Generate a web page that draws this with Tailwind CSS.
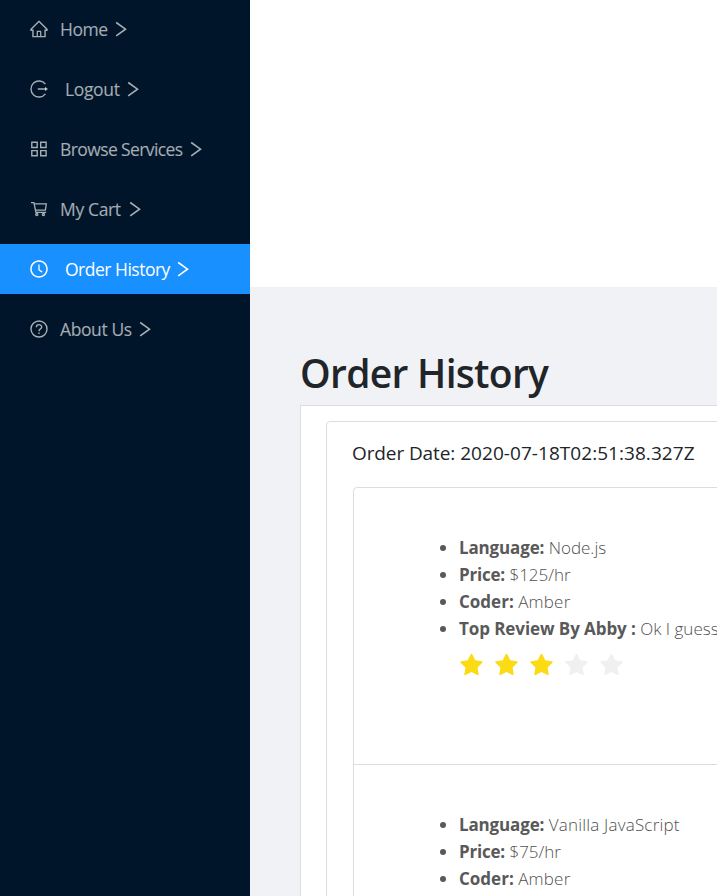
<!DOCTYPE html>
<html lang="en">
<head>
<meta charset="utf-8">
<title>Order History</title>
<script src="https://cdn.jsdelivr.net/npm/@tailwindcss/browser@4"></script>
</head>
<body class="h-[896px] overflow-hidden bg-[#f0f2f5] font-['Open_Sans','Noto_Sans',sans-serif]">
<svg class="hidden">
  <symbol id="star" viewBox="0 0 1024 1024"><path d="M908.1 353.1l-253.9-36.9L540.7 86.1c-3.1-6.3-8.2-11.4-14.5-14.5-15.8-7.8-35-1.3-42.9 14.5L369.8 316.2l-253.9 36.9c-7 1-13.4 4.3-18.3 9.3a32.05 32.05 0 0 0 .6 45.3l183.7 179.1-43.4 252.9a31.95 31.95 0 0 0 46.4 33.7L512 754l227.1 119.4c6.2 3.3 13.4 4.4 20.3 3.2 17.4-3 29.1-19.5 26.1-36.9l-43.4-252.9 183.7-179.1c5-4.9 8.3-11.3 9.3-18.3 2.7-17.5-9.5-33.7-27-36.3z"/></symbol>
  <symbol id="chev" viewBox="0 0 12 16"><path d="M1.2 1.5L10.5 8.2L1.2 14.9" fill="none" stroke="currentColor" stroke-width="1.6"/></symbol>
</svg>
<div class="flex h-full">
  <aside class="w-[250px] shrink-0 bg-[#001529] pt-1 text-[17.5px] tracking-[-0.5px] text-white/65">
    <nav class="flex flex-col gap-2.5 whitespace-nowrap">
      <a class="flex h-[50px] items-center pl-[29px]">
        <svg class="mr-[11px] size-5" viewBox="0 0 1024 1024" fill="currentColor"><path d="M946.5 505L560.1 118.8l-25.9-25.9a31.5 31.5 0 0 0-44.4 0L77.5 505a63.9 63.9 0 0 0-18.8 46c.4 35.2 29.7 63.3 64.9 63.3h42.5V940h691.8V614.3h43.4c17.1 0 33.2-6.7 45.3-18.8a63.6 63.6 0 0 0 18.7-45.3c0-17-6.7-33.1-18.8-45.2zM568 868H456V664h112v204zm217.9-325.7V868H632V640c0-22.1-17.9-40-40-40H432c-22.1 0-40 17.9-40 40v228H238.1V542.3h-96l370-369.7 23.1 23.1L882 542.3h-96.1z"/></svg>
        <span class="w-[55px]">Home</span><svg class="h-4 w-3"><use href="#chev"/></svg>
      </a>
      <a class="flex h-[50px] items-center pl-[29px]">
        <svg class="mr-[16px] size-5" viewBox="0 0 20 20" fill="none" stroke="currentColor" stroke-width="1.4"><path d="M16.4 5.2A8 8 0 1 0 16.4 14.8M8.8 10H17"/><path d="M16 7.8L19 10L16 12.2Z" fill="currentColor" stroke="none"/></svg>
        <span class="w-[62px] tracking-[-0.35px]">Logout</span><svg class="h-4 w-3"><use href="#chev"/></svg>
      </a>
      <a class="flex h-[50px] items-center pl-[29px]">
        <svg class="mr-[11px] size-5" viewBox="0 0 20 20" fill="none" stroke="currentColor" stroke-width="1.4"><path d="M2.8 3.3h5.4v5.2H2.8zM11.7 3.3h5.4v5.2h-5.4zM2.8 11.6h5.4v5.2H2.8zM11.7 11.6h5.4v5.2h-5.4z"/></svg>
        <span class="w-[130px] tracking-[-0.6px]">Browse Services</span><svg class="h-4 w-3"><use href="#chev"/></svg>
      </a>
      <a class="flex h-[50px] items-center pl-[29px]">
        <svg class="mr-[11px] size-5" viewBox="0 0 20 20" fill="none" stroke="currentColor" stroke-width="1.3"><path d="M2 3.7H4.9L6.9 13.4H17.2M5.3 4.9H17.3L16.4 11.1H6.5"/><circle cx="7.8" cy="15.6" r="1.1"/><circle cx="14.4" cy="15.6" r="1.1"/></svg>
        <span class="w-[69px] tracking-[-0.35px]">My Cart</span><svg class="h-4 w-3"><use href="#chev"/></svg>
      </a>
      <a class="flex h-[50px] items-center bg-[#1890ff] pl-[29px] text-white">
        <svg class="mr-[16px] size-5" viewBox="0 0 1024 1024" fill="currentColor"><path d="M512 64C264.6 64 64 264.6 64 512s200.6 448 448 448 448-200.6 448-448S759.4 64 512 64zm0 820c-205.4 0-372-166.6-372-372s166.6-372 372-372 372 166.6 372 372-166.6 372-372 372z"/><path d="M686.7 638.6L544.1 535.5V288c0-4.4-3.6-8-8-8H488c-4.4 0-8 3.6-8 8v275.4c0 2.6 1.2 5 3.3 6.5l165.4 120.6c3.6 2.6 8.6 1.8 11.2-1.7l28.6-39c2.6-3.7 1.8-8.7-1.8-11.2z"/></svg>
        <span class="w-[112px]">Order History</span><svg class="h-4 w-3"><use href="#chev"/></svg>
      </a>
      <a class="flex h-[50px] items-center pl-[29px]">
        <svg class="mr-[11px] size-5" viewBox="0 0 20 20" fill="none" stroke="currentColor" stroke-width="1.4"><circle cx="10" cy="10" r="8"/><path d="M7.4 8.2C7.4 4.8 12.7 4.9 12.7 8C12.7 10 10 9.8 10 12.2"/><path d="M10 13.4v1.5"/></svg>
        <span class="w-[79px] tracking-[-0.4px]">About Us</span><svg class="h-4 w-3"><use href="#chev"/></svg>
      </a>
    </nav>
  </aside>
  <div class="min-w-0 flex-1 overflow-hidden">
    <header class="h-[287px] bg-white"></header>
    <main class="w-[900px] whitespace-nowrap pl-[50px] pt-[62px]">
      <h1 class="h-[56px] text-[39px] font-semibold leading-[48px] tracking-[-0.7px] text-[#212529]">Order History</h1>
      <section class="h-[600px] border border-[#dcdddf] bg-white pl-[25px] pt-[15px]">
        <div class="h-[600px] rounded border border-[#dcdddf] pl-[25px]">
          <h2 class="h-[65px] pt-[16px] text-[19px] leading-[30px] text-[#212529]"><span class="tracking-[-0.1px]">Order Date:</span> <span class="tracking-[0.05px]">2020-07-18T02:51:38.327Z</span></h2>
          <div class="ml-px rounded border border-[#dcdddf] text-[17px] font-light leading-[27px] text-[#505050]">
            <article class="h-[277px] border-b border-[#dcdddf] pl-[105px] pt-[46px]">
              <ul class="list-disc marker:text-[#595959]">
                <li><b class="font-bold tracking-[-0.15px] text-[#595959]">Language:</b> Node.js</li>
                <li><b class="font-bold tracking-[-0.2px] text-[#595959]">Price:</b> $125/hr</li>
                <li><b class="font-bold text-[#595959]">Coder:</b> <span class="tracking-[0.2px]">Amber</span></li>
                <li><b class="font-bold tracking-[-0.08px] text-[#595959]">Top Review By Abby :</b> Ok I guess</li>
              </ul>
              <div class="-ml-px mt-[10px] flex gap-2 text-[#fadb14]">
                <svg class="size-[27px]" fill="currentColor"><use href="#star"/></svg>
                <svg class="size-[27px]" fill="currentColor"><use href="#star"/></svg>
                <svg class="size-[27px]" fill="currentColor"><use href="#star"/></svg>
                <svg class="size-[27px] text-[#f0f0f0]" fill="currentColor"><use href="#star"/></svg>
                <svg class="size-[27px] text-[#f0f0f0]" fill="currentColor"><use href="#star"/></svg>
              </div>
            </article>
            <article class="h-[277px] pl-[105px] pt-[46px]">
              <ul class="list-disc marker:text-[#595959]">
                <li><b class="font-bold tracking-[-0.15px] text-[#595959]">Language:</b> <span class="tracking-[0.2px]">Vanilla JavaScript</span></li>
                <li><b class="font-bold tracking-[-0.2px] text-[#595959]">Price:</b> $75/hr</li>
                <li><b class="font-bold text-[#595959]">Coder:</b> <span class="tracking-[0.2px]">Amber</span></li>
              </ul>
            </article>
          </div>
        </div>
      </section>
    </main>
  </div>
</div>
</body>
</html>
